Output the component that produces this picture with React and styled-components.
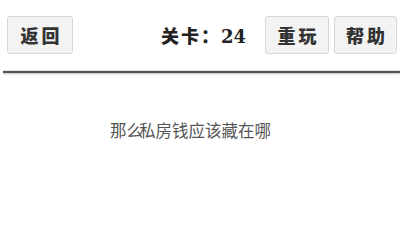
import React from 'react';
import styled, { createGlobalStyle } from 'styled-components';

const GlobalStyle = createGlobalStyle`
  html, body {
    margin: 0;
    padding: 0;
    background: #fff;
  }
  body {
    font-family: "Noto Sans CJK SC", sans-serif;
  }
`;

const Page = styled.div`
  width: 400px;
  height: 246px;
  overflow: hidden;
`;

const TopBar = styled.div`
  display: flex;
  align-items: center;
  height: 70px;
  padding: 0 3px 0 7px;
  box-sizing: border-box;
`;

const Spacer = styled.div`
  flex: 1;
`;

const Button = styled.div`
  display: flex;
  align-items: center;
  justify-content: center;
  width: ${(p) => p.w || 64}px;
  height: 38px;
  margin-left: ${(p) => p.ml || 0}px;
  box-sizing: border-box;
  background: #f3f3f3;
  border: 1px solid #d6d6d6;
  border-radius: 3px;
  color: #333;
  font-family: "Noto Sans CJK SC", sans-serif;
  font-weight: 900;
  font-size: 18px;
  letter-spacing: 3px;
  text-indent: 3px;
`;

const Level = styled.div`
  font-family: "DejaVu Serif", "Noto Sans CJK SC", serif;
  font-weight: 700;
  font-size: 18px;
  color: #222;
  margin-right: 19px;

  span {
    font-family: "Noto Sans CJK SC", sans-serif;
    font-weight: 900;
    letter-spacing: 2px;
  }
`;

const Divider = styled.div`
  margin-left: 3px;
  margin-top: 1px;
  height: 2px;
  background: #555;
  box-shadow: 0 1px 2px rgba(0, 0, 0, 0.25), 0 -1px 1px rgba(0, 0, 0, 0.12);
`;

const Question = styled.div`
  padding-top: 47px;
  padding-left: 110px;
  font-family: "Noto Sans CJK SC", sans-serif;
  font-size: 16.5px;
  color: #555;
  line-height: 20px;
`;

const Tight = styled.span`
  margin-right: -4px;
`;

export default function App() {
  return (
    <Page>
      <GlobalStyle />
      <TopBar>
        <Button w={66}>返回</Button>
        <Spacer />
        <Level>
          <span>关卡：</span>24
        </Level>
        <Button w={64}>重玩</Button>
        <Button w={63} ml={5}>帮助</Button>
      </TopBar>
      <Divider />
      <Question>
        那<Tight>么</Tight>私房钱应该藏在哪
      </Question>
    </Page>
  );
}
